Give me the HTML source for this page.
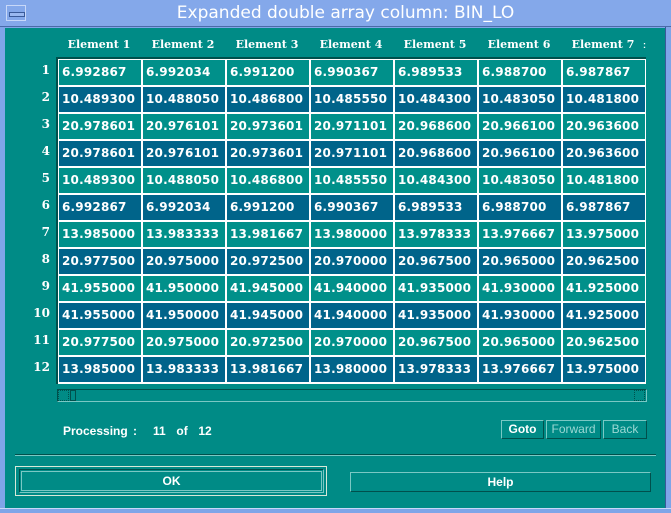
<!DOCTYPE html>
<html><head><style>
*{margin:0;padding:0;box-sizing:border-box}
body{width:671px;height:513px;background:#7fa5e8;position:relative;overflow:hidden;font-family:"Liberation Sans",sans-serif;font-weight:bold;color:#fff}
.a{position:absolute}
#title{left:0;top:0;width:671px;height:27px;background:#84a8ea;border-bottom:1px solid #4a6aa8;text-align:center;font:normal 17px "DejaVu Sans",sans-serif;line-height:27px;color:#fff;padding-left:20px}
#menu{left:6px;top:5px;width:20px;height:16px;border:1px solid #c8d8f8;}
#menu:after{content:"";position:absolute;left:2px;top:6px;width:14px;height:3px;border:1px solid #3a5a98;background:#9ab8f0}
#main{left:5px;top:28px;width:660px;height:480px;background:#008b86}
.h{font:bold 11px "DejaVu Serif","Liberation Serif",serif;top:38px;width:84px;text-align:center}
.r{left:30px;width:20px;text-align:right;font:bold 12px "DejaVu Serif",serif}
#grid{left:56px;top:57px;width:590px;height:327px;background:#fff;border-left:2px solid #00504c;border-top:2px solid #00504c}
.c{position:absolute;width:82px;height:25px;font:bold 12px "DejaVu Sans",sans-serif;line-height:25px;padding-left:3px;white-space:nowrap;overflow:hidden;letter-spacing:0.2px}
.t{background:#00908a}.b{background:#00648a}
.btn{border:1px solid #7ac8c4;border-right-color:#00504c;border-bottom-color:#00504c;text-align:center;font-size:12px}
</style></head><body>
<div class="a" id="title">Expanded double array column: BIN_LO</div>
<div class="a" id="menu"></div>
<div class="a" id="main"></div>
<div class="a h" style="left:57px">Element 1</div>
<div class="a h" style="left:141px">Element 2</div>
<div class="a h" style="left:225px">Element 3</div>
<div class="a h" style="left:309px">Element 4</div>
<div class="a h" style="left:393px">Element 5</div>
<div class="a h" style="left:477px">Element 6</div>
<div class="a h" style="left:561px">Element 7</div>
<div class="a" style="left:643px;top:40px;font-size:9px">:</div>
<div class="a" id="grid"></div>
<div id="cells"></div>
<div class="a" style="left:57px;top:389px;width:590px;height:13px;border:1px solid #00504c;border-right-color:#7ac8c4;border-bottom-color:#7ac8c4"></div>
<div class="a" style="left:58px;top:390px;width:11px;height:11px;border:1px dotted #00504c"></div>
<div class="a" style="left:70px;top:390px;width:6px;height:11px;border:1px solid #00504c"></div>
<div class="a" style="left:634px;top:390px;width:11px;height:11px;border:1px dotted #00504c"></div>
<div class="a" style="left:63px;top:424px;font-size:12px;word-spacing:2px">Processing :&nbsp;&nbsp; 11&nbsp; of&nbsp; 12</div>
<div class="a btn" style="left:501px;top:420px;width:43px;height:19px;line-height:17px">Goto</div>
<div class="a btn" style="left:546px;top:420px;width:55px;height:19px;line-height:17px;color:#9cd8d4;font-weight:normal">Forward</div>
<div class="a btn" style="left:603px;top:420px;width:44px;height:19px;line-height:17px;color:#9cd8d4;font-weight:normal">Back</div>
<div class="a" style="left:15px;top:454px;width:641px;height:2px;border-top:1px solid #00504c;border-bottom:1px solid #7ac8c4"></div>
<div class="a" style="left:15px;top:466px;width:312px;height:30px;border:1px solid #d8e8d8"></div>
<div class="a btn" style="left:19px;top:469px;width:305px;height:24px;line-height:22px;border-color:#00504c;border-right-color:#7ac8c4;border-bottom-color:#7ac8c4"><div style="margin:1px;border:1px solid #7ac8c4;height:20px;line-height:18px">OK</div></div>
<div class="a btn" style="left:350px;top:472px;width:301px;height:20px;line-height:18px">Help</div>
<div class="a" style="left:665px;top:27px;width:6px;height:486px;background:#7fa5e8;border-left:1px solid #3a5a98"></div>
<div class="a" style="left:0;top:508px;width:671px;height:5px;background:#7fa5e8;border-top:1px solid #c8d8f8"></div>
<script>
var d=[["6.992867","6.992034","6.991200","6.990367","6.989533","6.988700","6.987867"],
["10.489300","10.488050","10.486800","10.485550","10.484300","10.483050","10.481800"],
["20.978601","20.976101","20.973601","20.971101","20.968600","20.966100","20.963600"],
["20.978601","20.976101","20.973601","20.971101","20.968600","20.966100","20.963600"],
["10.489300","10.488050","10.486800","10.485550","10.484300","10.483050","10.481800"],
["6.992867","6.992034","6.991200","6.990367","6.989533","6.988700","6.987867"],
["13.985000","13.983333","13.981667","13.980000","13.978333","13.976667","13.975000"],
["20.977500","20.975000","20.972500","20.970000","20.967500","20.965000","20.962500"],
["41.955000","41.950000","41.945000","41.940000","41.935000","41.930000","41.925000"],
["41.955000","41.950000","41.945000","41.940000","41.935000","41.930000","41.925000"],
["20.977500","20.975000","20.972500","20.970000","20.967500","20.965000","20.962500"],
["13.985000","13.983333","13.981667","13.980000","13.978333","13.976667","13.975000"]];
var h="";
for(var i=0;i<12;i++){var y=60+i*27;
h+='<div class="a r" style="top:'+(y+3)+'px">'+(i+1)+'</div>';
for(var j=0;j<7;j++){h+='<div class="c '+(i%2?'b':'t')+'" style="left:'+(59+j*84)+'px;top:'+y+'px">'+d[i][j]+'</div>';}}
document.getElementById('cells').innerHTML=h;
</script>
</body></html>
